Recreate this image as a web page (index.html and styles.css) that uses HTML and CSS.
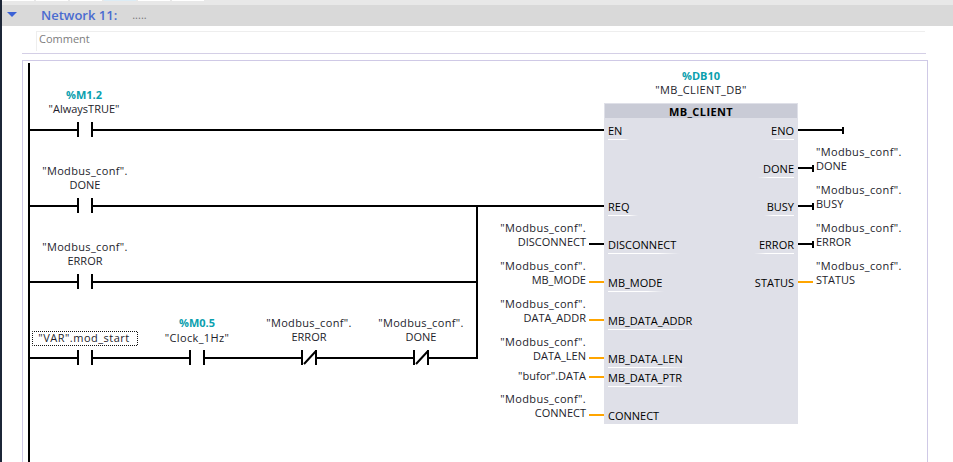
FILE: index.html
```html
<!DOCTYPE html>
<html lang="en">
<head>
    <meta charset="UTF-8">
    <title>Network 11</title>
    <link rel="stylesheet" href="styles.css">
</head>
<body>
    <div class="editor">
        <div class="tabs">
            <span class="tab"></span>
            <span class="tab"></span>
            <span class="tab"></span>
            <span class="tab tab-active"></span>
            <span class="tab"></span>
            <span class="tab"></span>
        </div>
        <div class="network-title">
            <svg class="arrow" width="10" height="5" viewBox="0 0 10 5"><polygon points="0,0 10,0 5,5"/></svg>
            <span class="network-name">Network 11:</span>
            <span class="network-dots">.....</span>
        </div>
        <div class="comment">Comment</div>
        <div class="rule"></div>
        <div class="canvas">
            <!-- viewBox uses page coordinates so the numbers read off the screen directly -->
            <svg class="ladder" width="904" height="402" viewBox="22 60 904 402">
                <!-- power rail and wires -->
                <g class="wire">
                    <path d="M29 63V462"/>
                    <path d="M30 130H78M92 130H604"/>
                    <path d="M30 206H78M92 206H604"/>
                    <path d="M30 282H78M92 282H477"/>
                    <path d="M30 358H78M92 358H190M204 358H302M316 358H414M428 358H477V205"/>
                    <path d="M78 122V137M92 122V137"/>
                    <path d="M78 198V213M92 198V213"/>
                    <path d="M78 274V289M92 274V289"/>
                    <path d="M78 350V365M92 350V365"/>
                    <path d="M190 350V365M204 350V365"/>
                    <path d="M302 350V365M316 350V365M304 364L316 351"/>
                    <path d="M414 350V365M428 350V365M416 364L428 351"/>
                    <path d="M798 130H843M843 127V134"/>
                    <path d="M798 168H813M813 165V172"/>
                    <path d="M798 206H813M813 203V210"/>
                    <path d="M798 244H813M813 241V248"/>
                    <path d="M589 244H604"/>
                </g>
                <g class="wire wire-data">
                    <path d="M798 282H813"/>
                    <path d="M589 282H604M589 320H604M589 358H604M589 377H604M589 415H604"/>
                </g>

                <!-- function block -->
                <rect class="block" x="604" y="103" width="194" height="321"/>
                <rect class="block-head" x="605" y="104" width="192" height="14"/>
                <defs>
                    <linearGradient id="fade-r"><stop offset="0.7" stop-color="#fff"/><stop offset="1" stop-color="#fff" stop-opacity="0"/></linearGradient>
                    <linearGradient id="fade-l"><stop offset="0" stop-color="#fff" stop-opacity="0"/><stop offset="0.3" stop-color="#fff"/></linearGradient>
                </defs>
                <g class="fade-r">
                    <rect x="608" y="139" width="22" height="1"/>
                    <rect x="608" y="215" width="30" height="1"/>
                    <rect x="608" y="253" width="72" height="1"/>
                    <rect x="608" y="291" width="56" height="1"/>
                    <rect x="608" y="329" width="86" height="1"/>
                    <rect x="608" y="367" width="80" height="1"/>
                    <rect x="608" y="386" width="76" height="1"/>
                </g>
                <g class="fade-l">
                    <rect x="770" y="139" width="24" height="1"/>
                    <rect x="758" y="177" width="36" height="1"/>
                    <rect x="764" y="215" width="30" height="1"/>
                    <rect x="754" y="253" width="40" height="1"/>
                </g>
                <text class="pin block-name mid" x="701" y="116">MB_CLIENT</text>
                <text class="pin" x="608" y="135">EN</text>
                <text class="pin" x="608" y="211">REQ</text>
                <text class="pin" x="608" y="249">DISCONNECT</text>
                <text class="pin" x="608" y="287">MB_MODE</text>
                <text class="pin" x="608" y="325">MB_DATA_ADDR</text>
                <text class="pin" x="608" y="363">MB_DATA_LEN</text>
                <text class="pin" x="608" y="382">MB_DATA_PTR</text>
                <text class="pin" x="608" y="420">CONNECT</text>
                <text class="pin end" x="794" y="135">ENO</text>
                <text class="pin end" x="794" y="173">DONE</text>
                <text class="pin end" x="794" y="211">BUSY</text>
                <text class="pin end" x="794" y="249">ERROR</text>
                <text class="pin end" x="794" y="287">STATUS</text>

                <!-- contact operands -->
                <rect class="selected" x="32.5" y="331.5" width="105" height="14"/>
                <text class="addr mid" x="84" y="99">%M1.2</text>
                <text class="tag mid" x="84" y="113">"AlwaysTRUE"</text>
                <text class="tag wide mid" x="85" y="175">"Modbus_conf".</text>
                <text class="tag mid" x="85" y="189">DONE</text>
                <text class="tag wide mid" x="85" y="251">"Modbus_conf".</text>
                <text class="tag mid" x="85" y="265">ERROR</text>
                <text class="tag wider mid" x="84" y="342">"VAR".mod_start</text>
                <text class="addr mid" x="197" y="327">%M0.5</text>
                <text class="tag wide mid" x="197" y="342">"Clock_1Hz"</text>
                <text class="tag wide mid" x="309" y="327">"Modbus_conf".</text>
                <text class="tag mid" x="309" y="341">ERROR</text>
                <text class="tag wide mid" x="421" y="327">"Modbus_conf".</text>
                <text class="tag mid" x="421" y="341">DONE</text>
                <text class="addr mid" x="701" y="80">%DB10</text>
                <text class="tag wide mid" x="701" y="94">"MB_CLIENT_DB"</text>

                <!-- block inputs -->
                <text class="tag wide end" x="586" y="232">"Modbus_conf".</text>
                <text class="tag end" x="586" y="246">DISCONNECT</text>
                <text class="tag wide end" x="586" y="270">"Modbus_conf".</text>
                <text class="tag end" x="586" y="284">MB_MODE</text>
                <text class="tag wide end" x="586" y="308">"Modbus_conf".</text>
                <text class="tag end" x="586" y="322">DATA_ADDR</text>
                <text class="tag wide end" x="586" y="346">"Modbus_conf".</text>
                <text class="tag end" x="586" y="360">DATA_LEN</text>
                <text class="tag end" x="586" y="380">"bufor".DATA</text>
                <text class="tag wide end" x="586" y="403">"Modbus_conf".</text>
                <text class="tag end" x="586" y="417">CONNECT</text>

                <!-- block outputs -->
                <text class="tag wide" x="816" y="156">"Modbus_conf".</text>
                <text class="tag" x="816" y="170">DONE</text>
                <text class="tag wide" x="816" y="194">"Modbus_conf".</text>
                <text class="tag" x="816" y="208">BUSY</text>
                <text class="tag wide" x="816" y="232">"Modbus_conf".</text>
                <text class="tag" x="816" y="246">ERROR</text>
                <text class="tag wide" x="816" y="270">"Modbus_conf".</text>
                <text class="tag" x="816" y="284">STATUS</text>
            </svg>
        </div>
    </div>
</body>
</html>
```

FILE: styles.css
```css
html, body {
    margin: 0;
    padding: 0;
    height: 100%;
    overflow: hidden;
    background-color: #fff;
}
.editor {
    height: 462px;
    border-left: 2px solid #1c2638;
    font-family: "Open Sans", Arial, sans-serif;
    overflow: hidden;
}
.tabs {
    display: flex;
    gap: 2px;
    height: 4px;
    background-color: #e8e8e8;
    padding-bottom: 1px;
}
.tab {
    width: 32px;
    height: 1px;
    background-color: #fff;
}
.tab-active {
    background-color: #dcecf5;
}
.network-title {
    display: flex;
    align-items: center;
    height: 21px;
    box-sizing: border-box;
    background-color: #d9d9d9;
    padding: 0 0 2px 5px;
}
.arrow {
    fill: #3b62d6;
    margin-right: 24px;
}
.network-name {
    color: #4a6bd0;
    font-size: 13px;
    font-weight: 600;
}
.network-dots {
    color: #777;
    font-size: 11px;
    margin-left: 15px;
}
.comment {
    margin: 5px 0 0 34px;
    width: 889px;
    height: 20px;
    box-sizing: border-box;
    border-top: 1px solid #eee;
    border-left: 1px solid #eee;
    padding: 0 0 0 2px;
    color: #7d7d7d;
    font-size: 11px;
    line-height: 14px;
}
.rule {
    margin: 2px 0 0 20px;
    width: 904px;
    height: 1px;
    background-color: #d4cfe6;
}
.canvas {
    margin: 6px 0 0 20px;
    width: 904px;
    height: 402px;
    border: 1px solid #cfc9e6;
    border-bottom: none;
}
.ladder {
    display: block;
    margin: -1px 0 0 -1px;
}
.wire {
    fill: none;
    stroke: #000;
    stroke-width: 2;
}
.wire-data {
    stroke: #ffa500;
}
.block {
    fill: #dfe0e8;
}
.block-head {
    fill: #c9cbd6;
}
.fade-r {
    fill: url(#fade-r);
}
.fade-l {
    fill: url(#fade-l);
}
.selected {
    fill: #fff;
    stroke: #111;
    stroke-dasharray: 1 1;
    stroke-dashoffset: 0.5;
}
text {
    font-family: "Open Sans", Arial, sans-serif;
    font-size: 11px;
}
.tag {
    fill: #1d1d2b;
}
.wide {
    letter-spacing: 0.35px;
}
.wider {
    letter-spacing: 0.5px;
}
.addr {
    fill: #0aa0ae;
    font-weight: 700;
}
.pin {
    fill: #000;
    font-weight: 500;
}
.block-name {
    font-weight: 700;
    letter-spacing: 0.4px;
}
.mid {
    text-anchor: middle;
}
.end {
    text-anchor: end;
}
```
